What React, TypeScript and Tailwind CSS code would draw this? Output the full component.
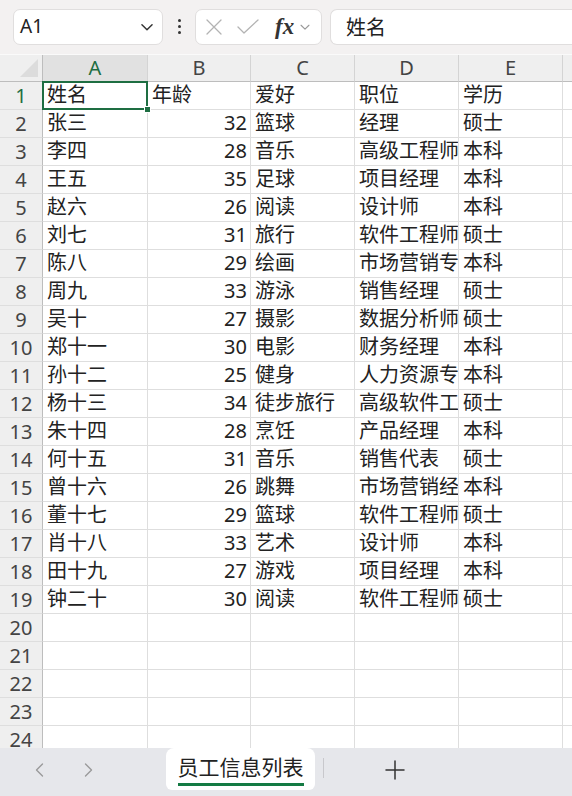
import React from "react";

const rows: string[][] = [
  ["姓名", "年龄", "爱好", "职位", "学历"],
  ["张三", "32", "篮球", "经理", "硕士"],
  ["李四", "28", "音乐", "高级工程师", "本科"],
  ["王五", "35", "足球", "项目经理", "本科"],
  ["赵六", "26", "阅读", "设计师", "本科"],
  ["刘七", "31", "旅行", "软件工程师", "硕士"],
  ["陈八", "29", "绘画", "市场营销专员", "本科"],
  ["周九", "33", "游泳", "销售经理", "硕士"],
  ["吴十", "27", "摄影", "数据分析师", "硕士"],
  ["郑十一", "30", "电影", "财务经理", "本科"],
  ["孙十二", "25", "健身", "人力资源专员", "本科"],
  ["杨十三", "34", "徒步旅行", "高级软件工程师", "硕士"],
  ["朱十四", "28", "烹饪", "产品经理", "本科"],
  ["何十五", "31", "音乐", "销售代表", "硕士"],
  ["曾十六", "26", "跳舞", "市场营销经理", "本科"],
  ["董十七", "29", "篮球", "软件工程师", "硕士"],
  ["肖十八", "33", "艺术", "设计师", "本科"],
  ["田十九", "27", "游戏", "项目经理", "本科"],
  ["钟二十", "30", "阅读", "软件工程师", "硕士"],
];

const TOTAL_ROWS = 24;
const cols = ["A", "B", "C", "D", "E"];
const gridCols = "grid grid-cols-[43px_105px_103px_104px_104px_104px_1fr]";

function Chevron({ className }: { className?: string }) {
  return (
    <svg viewBox="0 0 16 16" className={className} fill="none" stroke="currentColor" strokeWidth="1.3" strokeLinecap="round" strokeLinejoin="round">
      <path d="M3.5 6l4.5 4.5L12.5 6" />
    </svg>
  );
}

export default function App() {
  const font = { fontFamily: '"Noto Sans", "Noto Sans CJK SC", sans-serif' };
  return (
    <div className="w-[572px] h-[796px] flex flex-col overflow-hidden bg-white text-[#222]" style={font}>
      {/* Toolbar */}
      <div className="h-[54px] shrink-0 bg-[#f3f1f1] flex items-center pl-[13px] pb-[1px]">
        <div className="w-[150px] h-[36px] bg-white border border-[#e0dede] rounded-[7px] flex items-center justify-between pl-[6px] pr-[6px]">
          <span className="text-[19px] text-[#222]" style={{ fontFamily: '"Noto Sans", sans-serif' }}>A1</span>
          <Chevron className="w-[18px] h-[18px] text-[#333]" />
        </div>
        <div className="w-[32px] flex flex-col items-center gap-[3px]">
          <span className="w-[3px] h-[3px] bg-[#333] rounded-full" />
          <span className="w-[3px] h-[3px] bg-[#333] rounded-full" />
          <span className="w-[3px] h-[3px] bg-[#333] rounded-full" />
        </div>
        <div className="w-[127px] h-[36px] bg-white border border-[#e0dede] rounded-[7px] flex items-center pl-[8px]">
          <svg viewBox="0 0 20 20" className="w-[20px] h-[20px] text-[#b3b3b3]" fill="none" stroke="currentColor" strokeWidth="1.3" strokeLinecap="round">
            <path d="M3 3l14 14M17 3L3 17" />
          </svg>
          <svg viewBox="0 0 24 20" className="w-[24px] h-[20px] ml-[12px] text-[#b3b3b3]" fill="none" stroke="currentColor" strokeWidth="1.3" strokeLinecap="round" strokeLinejoin="round">
            <path d="M2 10l6 6L22 3" />
          </svg>
          <span className="ml-[15px] text-[23px] italic font-bold text-[#333] leading-none" style={{ fontFamily: '"Liberation Serif", "DejaVu Serif", serif' }}>fx</span>
          <Chevron className="w-[14px] h-[14px] ml-[4px] text-[#999]" />
        </div>
        <div className="ml-[8px] flex-1 h-[36px] bg-white border border-[#e0dede] rounded-l-[7px] border-r-0 flex items-center pl-[15px]">
          <span className="text-[20px] text-[#222]" style={{ fontFamily: '"Noto Sans CJK SC", sans-serif' }}>姓名</span>
        </div>
      </div>

      {/* Sheet */}
      <div className="flex-1 overflow-hidden relative">
        {/* Column headers */}
        <div className={`${gridCols} h-[28px] bg-[#efefef] border-t border-[#fafafa]`}>
          <div className="border-r border-b border-[#bdbdbd] flex items-end justify-end pr-[4px] pb-[4px]">
            <svg viewBox="0 0 18 18" className="w-[18px] h-[18px]">
              <path d="M18 0V18H0Z" fill="#dcdcdc" />
            </svg>
          </div>
          {cols.map((c, i) => (
            <div
              key={c}
              className={`border-r border-b flex items-center justify-center text-[20px] leading-none ${
                i === 0 ? "bg-[#e1e1e1] text-[#1e6e42] border-b-[#bdbdbd] border-r-[#d4d4d4]" : "text-[#444] border-r-[#d4d4d4] border-b-[#bdbdbd]"
              }`}
            >
              {c}
            </div>
          ))}
          <div className="border-b border-[#bdbdbd]" />
        </div>

        {Array.from({ length: TOTAL_ROWS }).map((_, r) => {
          const data = rows[r];
          return (
            <div key={r} className={`${gridCols} h-[28px]`}>
              <div
                className={`bg-[#efefef] border-r border-b border-r-[#bdbdbd] border-b-[#dedede] flex items-center justify-center text-[20px] leading-none ${
                  r === 0 ? "text-[#1e6e42] bg-[#e1e1e1]" : "text-[#444]"
                }`}
              >
                {r + 1}
              </div>
              {cols.map((c, ci) => {
                const v = data ? data[ci] : "";
                const isNum = v !== "" && /^\d+$/.test(v);
                return (
                  <div
                    key={c}
                    className={`relative border-r border-b border-[#dedede] overflow-hidden whitespace-nowrap text-[20px] leading-[28px] ${
                      isNum ? "text-right pr-[3px]" : "pl-[4px]"
                    }`}
                    style={{ fontFamily: '"Noto Sans", "Noto Sans CJK SC", sans-serif' }}
                  >
                    <span className="block -mt-[1px]">{v}</span>
                  </div>
                );
              })}
              <div className="border-b border-[#dedede]" />
            </div>
          );
        })}

        {/* Selection overlay on A1 */}
        <div className="absolute left-[42px] top-[27px] w-[106px] h-[29px] border-2 border-[#1e6e42] pointer-events-none" />
        <div className="absolute left-[144px] top-[52px] w-[7px] h-[7px] bg-[#1e6e42] border border-white" />
      </div>

      {/* Tab bar */}
      <div className="h-[48px] shrink-0 bg-[#e6e7eb] flex items-start">
        <div className="flex items-center h-[44px] pl-[30px] gap-[28px] text-[#9a9a9a]">
          <svg viewBox="0 0 20 20" className="w-[20px] h-[20px]" fill="none" stroke="currentColor" strokeWidth="1.4" strokeLinecap="round" strokeLinejoin="round">
            <path d="M12.5 4L6.5 10l6 6" />
          </svg>
          <svg viewBox="0 0 20 20" className="w-[20px] h-[20px]" fill="none" stroke="currentColor" strokeWidth="1.4" strokeLinecap="round" strokeLinejoin="round">
            <path d="M7.5 4l6 6-6 6" />
          </svg>
        </div>
        <div className="ml-[68px] w-[149px] h-[42px] bg-white rounded-[6px] rounded-t-[8px] flex flex-col items-center pt-[4px]">
          <span className="text-[21px] leading-[28px] text-[#222]" style={{ fontFamily: '"Noto Sans CJK SC", sans-serif' }}>员工信息列表</span>
          <span className="mt-[3px] w-[126px] h-[3px] bg-[#137a43]" />
        </div>
        <div className="ml-[8px] mt-[10px] w-[1px] h-[20px] bg-[#c8c8cc]" />
        <div className="ml-[60px] h-[44px] flex items-center">
          <svg viewBox="0 0 22 22" className="w-[22px] h-[22px] text-[#333]" fill="none" stroke="currentColor" strokeWidth="1.5" strokeLinecap="round">
            <path d="M11 2v18M2 11h18" />
          </svg>
        </div>
      </div>
    </div>
  );
}
